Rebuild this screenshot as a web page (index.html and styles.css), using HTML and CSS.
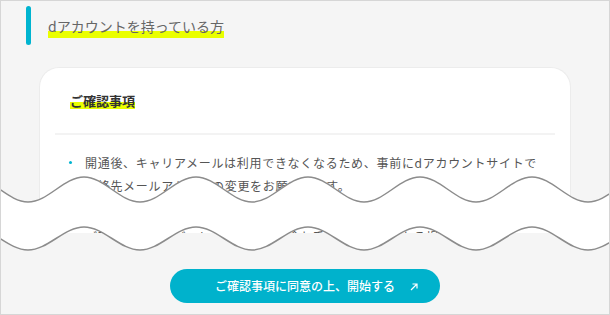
FILE: index.html
```html
<!DOCTYPE html>
<html lang="ja">
<head>
  <meta charset="UTF-8" />
  <meta name="viewport" content="width=device-width, initial-scale=1.0" />
  <title>dアカウントを持っている方</title>
  <link rel="stylesheet" href="styles.css">
</head>
<body>
  <div class="frame">
    <div class="section-title">
      <span class="title-bar"></span>
      <h2 class="title-text"><span class="marker">dアカウントを持っている方</span></h2>
    </div>

    <div class="card">
      <div class="card-head">
        <h3><span class="marker">ご確認事項</span></h3>
      </div>
      <ul class="notes">
        <li>開通後、キャリアメールは利用できなくなるため、事前にdアカウントサイトで連絡先メールアドレスの変更をお願いします。</li>
        <li class="later">ご利用中のサービスによっては、別途お手続きが必要となる場合があります。</li>
      </ul>
    </div>

    <svg class="cut" width="610" height="90" viewBox="0 0 610 90">
      <path fill="#fff" d="M -28 7 C -8 7 8 32 28 32 S 64 7 84 7 S 120 32 140 32 S 176 7 196 7 S 232 32 252 32 S 288 7 308 7 S 344 32 364 32 S 400 7 420 7 S 456 32 476 32 S 512 7 532 7 S 568 32 588 32 S 624 7 644 7 L 644 57 C 624 57 608 80 588 80 S 552 57 532 57 S 496 80 476 80 S 440 57 420 57 S 384 80 364 80 S 328 57 308 57 S 272 80 252 80 S 216 57 196 57 S 160 80 140 80 S 104 57 84 57 S 48 80 28 80 S -8 57 -28 57 Z"/>
      <path class="wave" d="M -28 7 C -8 7 8 32 28 32 S 64 7 84 7 S 120 32 140 32 S 176 7 196 7 S 232 32 252 32 S 288 7 308 7 S 344 32 364 32 S 400 7 420 7 S 456 32 476 32 S 512 7 532 7 S 568 32 588 32 S 624 7 644 7"/>
      <path class="wave" d="M -28 57 C -8 57 8 80 28 80 S 64 57 84 57 S 120 80 140 80 S 176 57 196 57 S 232 80 252 80 S 288 57 308 57 S 344 80 364 80 S 400 57 420 57 S 456 80 476 80 S 512 57 532 57 S 568 80 588 80 S 624 57 644 57"/>
    </svg>

    <a class="start-button" href="#">
      ご確認事項に同意の上、開始する
      <svg class="arrow" width="8" height="8" viewBox="0 0 8 8">
        <path d="M1 7 L7 1 M2.5 1 H7 V5.5" />
      </svg>
    </a>
  </div>
</body>
</html>
```

FILE: styles.css
```css
body {
  margin: 0;
  font-family: "Noto Sans CJK JP", "Noto Sans", sans-serif;
  background-color: #f5f5f5;
}
.frame {
  position: relative;
  box-sizing: border-box;
  width: 610px;
  height: 315px;
  border: 1px solid #d6d6d6;
  background-color: #f5f5f5;
  overflow: hidden;
}
.section-title {
  display: flex;
  align-items: flex-start;
  margin: 5px 0 0 25px;
}
.title-bar {
  width: 5px;
  height: 39px;
  border-radius: 3px;
  background: #00b4d0;
}
.title-text {
  margin: 10px 0 0 17px;
  font-size: 14px;
  font-weight: normal;
  color: #666;
}
.marker {
  display: inline-block;
  line-height: 20px;
  padding-bottom: 2px;
  background: linear-gradient(#eaff00, #eaff00) no-repeat 0 15px / 100% 7px;
}
.card {
  height: 165px;
  margin: 22px 38px 0 38px;
  padding: 0 15px;
  background: white;
  border: 1px solid #ececec;
  border-bottom: none;
  border-radius: 20px 20px 0 0;
  overflow: hidden;
}
.card-head {
  padding: 23px 15px 23px;
  border-bottom: 2px solid #f3f3f3;
}
.card-head h3 {
  margin: 0;
  font-size: 13px;
  color: #333;
}
.card-head .marker {
  line-height: 18px;
  padding-bottom: 0;
  background-position: 0 10px;
}
.notes {
  list-style: none;
  margin: 0;
  padding: 16px 12px 0 0;
  font-size: 12px;
  line-height: 23px;
  letter-spacing: 0.7px;
  color: #555;
}
.notes li {
  position: relative;
  padding-left: 30px;
}
.notes li::before {
  content: "";
  position: absolute;
  left: 14px;
  top: 10px;
  width: 3px;
  height: 3px;
  border-radius: 50%;
  background: #00b4d0;
}
.notes .later {
  margin-top: 28px;
}
.cut {
  position: absolute;
  top: 169px;
  left: -1px;
}
.wave {
  fill: none;
  stroke: #8c8c8c;
  stroke-width: 1.5;
}
.start-button {
  position: relative;
  display: block;
  width: 270px;
  height: 34px;
  margin: 36px auto 0;
  border-radius: 17px;
  background: #00b2cc;
  color: white;
  font-size: 12px;
  font-weight: 500;
  line-height: 34px;
  text-align: center;
  text-decoration: none;
}
.arrow {
  position: absolute;
  right: 22px;
  top: 14px;
}
.arrow path {
  fill: none;
  stroke: white;
  stroke-width: 1.2;
}
```
